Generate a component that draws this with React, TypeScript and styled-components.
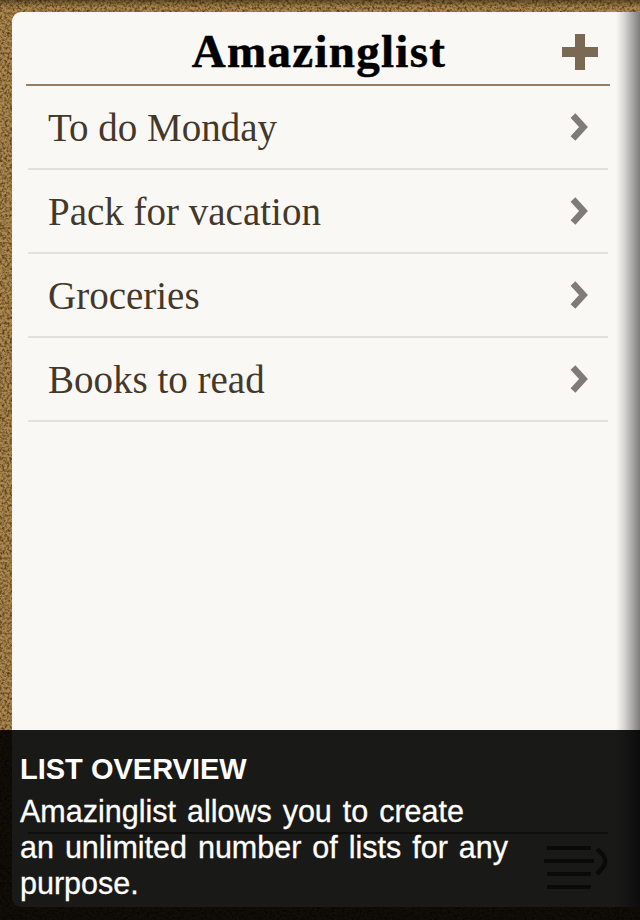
import React from "react";
import styled, { createGlobalStyle } from "styled-components";

const Global = createGlobalStyle`
  html, body { margin: 0; padding: 0; background: #8f6d3c; }
  #root { width: 640px; height: 920px; }
`;

const Page = styled.div`
  position: relative;
  width: 640px;
  height: 920px;
  overflow: hidden;
  padding: 12px 0 13px 12px;
  box-sizing: border-box;
  display: flex;
`;

const Texture = styled.svg`
  position: absolute;
  inset: 0;
  width: 640px;
  height: 920px;
`;

const Card = styled.main`
  position: relative;
  flex: 1;
  display: flex;
  flex-direction: column;
  background: #faf8f5;
  border-radius: 9px 0 0 9px;
  padding: 0 30px 0 14px;
`;

const Header = styled.header`
  height: 74px;
  display: flex;
  align-items: center;
  justify-content: center;
  position: relative;
  border-bottom: 2px solid #94805f;
  box-sizing: border-box;
`;

const Title = styled.h1`
  margin: 6px 0 0 2px;
  font: bold 47px/1 "Liberation Serif", serif;
  letter-spacing: 1.3px;
  -webkit-text-stroke: 0.5px #000;
  color: #000;
`;

const AddIcon = styled.svg`
  position: absolute;
  right: 12px;
  top: 22px;
  width: 36px;
  height: 36px;
`;

const List = styled.ul`
  list-style: none;
  margin: 0;
  padding: 0 2px;
  flex: 1;
`;

const Row = styled.li`
  height: 84px;
  box-sizing: border-box;
  border-bottom: 2px solid #e3e1dc;
  display: flex;
  align-items: center;
  justify-content: space-between;
  padding: 0 20px;
`;

const RowLabel = styled.span`
  font: 39px/1 "Liberation Serif", serif;
  color: #44382b;
`;

const Chevron = styled.svg`
  width: 18px;
  height: 28px;
`;

const Toolbar = styled.footer`
  height: 75px;
  margin: 0 2px;
  box-sizing: border-box;
  border-top: 2px solid #8a8a8a;
  display: flex;
  justify-content: flex-end;
  align-items: flex-start;
  padding-top: 12px;
`;

const MenuIcon = styled.svg`
  width: 68px;
  height: 48px;
  margin-right: -2px;
`;

const RightShade = styled.div`
  position: absolute;
  top: 0;
  right: 0;
  bottom: 0;
  width: 24px;
  background: linear-gradient(to right, rgba(70, 70, 70, 0), rgba(70, 70, 70, 0.2) 35%, rgba(70, 70, 70, 0.7));
`;

const TopEdge = styled.div`
  position: absolute;
  top: 0;
  left: 0;
  right: 0;
  height: 12px;
  background: linear-gradient(to bottom, rgba(20, 12, 0, 0.45), rgba(20, 12, 0, 0) 60%);
`;

const Overlay = styled.aside`
  position: absolute;
  left: 0;
  right: 0;
  top: 730px;
  bottom: 0;
  background: rgba(0, 0, 0, 0.9);
  color: #fff;
  padding: 22px 20px 0;
  box-sizing: border-box;
  font-family: "Liberation Sans", Arial, sans-serif;
`;

const OverlayTitle = styled.h2`
  margin: 0 0 7px;
  font-size: 29px;
  line-height: 34px;
  font-weight: bold;
`;

const OverlayText = styled.p`
  margin: 0;
  font-size: 30.5px;
  line-height: 36px;
  word-spacing: 2.5px;
  -webkit-text-stroke: 0.3px #fff;
`;

const lists = ["To do Monday", "Pack for vacation", "Groceries", "Books to read"];

export default function App() {
  return (
    <>
      <Global />
      <Page>
        <Texture aria-hidden="true">
          <filter id="cork" x="0" y="0" width="100%" height="100%" colorInterpolationFilters="sRGB">
            <feTurbulence type="fractalNoise" baseFrequency="0.4" numOctaves="4" seed="7" />
            <feColorMatrix
              type="matrix"
              values="0 0 0 0 0.32  0 0 0 0 0.21  0 0 0 0 0.07  2.2 0 0 0 -0.85"
            />
          </filter>
          <rect width="640" height="920" fill="#ab8850" />
          <rect width="640" height="920" filter="url(#cork)" />
        </Texture>
        <TopEdge />
        <Card>
          <Header>
            <Title>Amazinglist</Title>
            <AddIcon viewBox="0 0 36 36" aria-label="Add">
              <path d="M13 0h10v13h13v10H23v13H13V23H0V13h13z" fill="#7a6a55" />
            </AddIcon>
          </Header>
          <List>
            {lists.map((name) => (
              <Row key={name}>
                <RowLabel>{name}</RowLabel>
                <Chevron viewBox="0 0 18 28" aria-hidden="true">
                  <path d="M3 2.5l10.5 11.5L3 25.5" fill="none" stroke="#7e7b78" strokeWidth="6.5" />
                </Chevron>
              </Row>
            ))}
          </List>
          <Toolbar>
            <MenuIcon viewBox="0 0 68 48" aria-hidden="true">
              <path d="M5 2h44M2 15h50M5 28h44M5 41h44" stroke="#666" strokeWidth="4" fill="none" />
              <path d="M55 3l6 6c3 4 3 8 0 12l-6 7" stroke="#666" strokeWidth="4.5" fill="none" />
            </MenuIcon>
          </Toolbar>
          <RightShade />
        </Card>
        <Overlay>
          <OverlayTitle>LIST OVERVIEW</OverlayTitle>
          <OverlayText>
            Amazinglist allows you to create
            <br />
            an unlimited number of lists for any
            <br />
            purpose.
          </OverlayText>
        </Overlay>
      </Page>
    </>
  );
}
